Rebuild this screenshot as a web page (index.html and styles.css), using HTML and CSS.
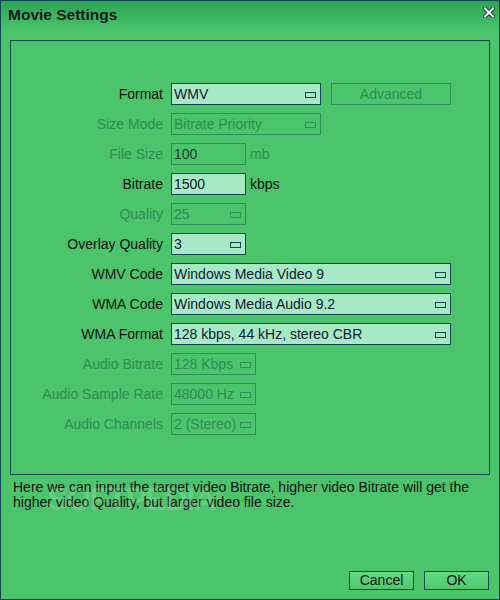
FILE: index.html
```html
<!DOCTYPE html>
<html lang="en">
<head>
    <meta charset="UTF-8">
    <title>Movie Settings</title>
    <link rel="stylesheet" href="styles.css">
</head>
<body>
    <div class="window">
        <div class="title-bar">
            <span class="title">Movie Settings</span>
            <svg class="close-icon" width="12" height="11" viewBox="0 0 12 11">
                <path d="M2 1.5 L10 9.5 M10 1.5 L2 9.5" stroke="#1d3b3b" stroke-width="4" stroke-linecap="square"/>
                <path d="M2 1.5 L10 9.5 M10 1.5 L2 9.5" stroke="#ffffff" stroke-width="2" stroke-linecap="square"/>
            </svg>
        </div>

        <div class="panel">
            <div class="row">
                <label>Format</label>
                <div class="select w150">WMV<span class="arrow"></span></div>
                <div class="button disabled advanced">Advanced</div>
            </div>
            <div class="row">
                <label class="disabled">Size Mode</label>
                <div class="select w150 disabled">Bitrate Priority<span class="arrow"></span></div>
            </div>
            <div class="row">
                <label class="disabled">File Size</label>
                <div class="input w75 disabled">100</div>
                <span class="unit disabled">mb</span>
            </div>
            <div class="row">
                <label>Bitrate</label>
                <div class="input w75">1500</div>
                <span class="unit">kbps</span>
            </div>
            <div class="row">
                <label class="disabled">Quality</label>
                <div class="select w75 disabled">25<span class="arrow"></span></div>
            </div>
            <div class="row">
                <label>Overlay Quality</label>
                <div class="select w75">3<span class="arrow"></span></div>
            </div>
            <div class="row">
                <label>WMV Code</label>
                <div class="select w280">Windows Media Video 9<span class="arrow"></span></div>
            </div>
            <div class="row">
                <label>WMA Code</label>
                <div class="select w280">Windows Media Audio 9.2<span class="arrow"></span></div>
            </div>
            <div class="row">
                <label>WMA Format</label>
                <div class="select w280">128 kbps, 44 kHz, stereo CBR<span class="arrow"></span></div>
            </div>
            <div class="row">
                <label class="disabled">Audio Bitrate</label>
                <div class="select w85 disabled">128 Kbps<span class="arrow"></span></div>
            </div>
            <div class="row">
                <label class="disabled">Audio Sample Rate</label>
                <div class="select w85 disabled">48000 Hz<span class="arrow"></span></div>
            </div>
            <div class="row">
                <label class="disabled">Audio Channels</label>
                <div class="select w85 disabled">2 (Stereo)<span class="arrow"></span></div>
            </div>
        </div>

        <p class="description">Here we can input the target video Bitrate, higher video Bitrate will get the higher video Quality, but larger video file size.</p>
        <span class="watermark">SOFTPEDIA<sup>®</sup></span>

        <div class="actions">
            <div class="button">Cancel</div>
            <div class="button">OK</div>
        </div>
    </div>
</body>
</html>
```

FILE: styles.css
```css
body {
    margin: 0;
    font-family: 'Liberation Sans', Arial, sans-serif;
    font-size: 14px;
    color: #111;
}
.window {
    position: relative;
    box-sizing: border-box;
    width: 500px;
    height: 600px;
    border: 1px solid #0e4654;
    background-color: #4cc46c;
    display: flex;
    flex-direction: column;
}
.title-bar {
    position: relative;
    height: 39px;
    box-sizing: border-box;
    padding: 5px 0 0 7px;
    background: linear-gradient(to bottom, #2ea455 0px, #3cb761 18px, #4cc46c 30px);
}
.title {
    font-size: 15.5px;
    font-weight: bold;
    line-height: 17px;
    color: #1a1a1a;
}
.close-icon {
    position: absolute;
    top: 6px;
    right: 4px;
}
/* Settings panel */
.panel {
    margin: 0 9px 0 9px;
    height: 435px;
    box-sizing: border-box;
    border: 1px solid #0e4654;
    padding-top: 42px;
    display: flex;
    flex-direction: column;
    gap: 8px;
}
.row {
    display: flex;
    align-items: center;
    height: 22px;
}
.row label {
    width: 152px;
    padding-right: 8px;
    text-align: right;
    line-height: 22px;
    color: #111;
}
.disabled {
    color: #2e8c55 !important;
}
.select, .input {
    position: relative;
    box-sizing: border-box;
    height: 22px;
    line-height: 20px;
    padding-left: 2px;
    border: 1px solid #0e4654;
    background-color: #a8e9c5;
    color: #0d1a33;
    white-space: nowrap;
}
.select.disabled, .input.disabled {
    border-color: #2e8f5c;
    background-color: transparent;
}
.input.disabled {
    color: #17402c !important;
}
.w75 { width: 75px; }
.w85 { width: 85px; }
.w150 { width: 150px; }
.w280 { width: 280px; }
.arrow {
    position: absolute;
    right: 4px;
    top: 8px;
    width: 9px;
    height: 4px;
    border: 1px solid #0e4654;
}
.select.disabled .arrow {
    border-color: #2e8f5c;
}
.unit {
    margin-left: 4px;
}
.button {
    box-sizing: border-box;
    width: 65px;
    height: 19px;
    line-height: 17px;
    text-align: center;
    border: 1px solid #0e4654;
    background: linear-gradient(to bottom, #62da86, #4fc870);
    color: #111;
}
.button.disabled {
    background: transparent;
    border-color: #2e8f5c;
}
.advanced {
    width: 120px;
    height: 22px;
    line-height: 20px;
    margin-left: 10px;
}
.description {
    margin: 5px 0 0 0;
    padding: 0 20px 0 12px;
    line-height: 15px;
    color: #111;
}
.watermark {
    position: absolute;
    left: 46px;
    top: 481px;
    font-size: 31px;
    font-weight: bold;
    letter-spacing: -1px;
    color: rgba(255, 255, 255, 0.16);
    pointer-events: none;
}
.watermark sup {
    font-size: 10px;
}
.actions {
    margin-top: auto;
    padding: 0 10px 9px 0;
    display: flex;
    justify-content: flex-end;
    gap: 10px;
}
```
